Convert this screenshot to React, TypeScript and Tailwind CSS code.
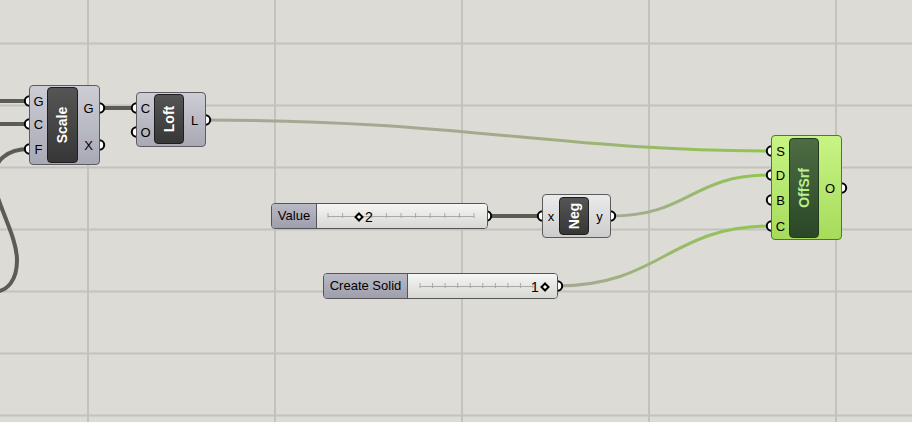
import React from 'react';

type Port = { name: string; y: number };

interface GhComponent {
  id: string;
  label: string;
  x: number;
  y: number;
  w: number;
  h: number;
  pillLeft: number;
  pillWidth: number;
  pillTop: number;
  pillBottom: number;
  inputs: Port[];
  outputs: Port[];
  theme: 'gray' | 'light' | 'green';
}

interface Slider {
  id: string;
  label: string;
  x: number;
  y: number;
  labelW: number;
  bodyW: number;
  value: string;
  trackFrom: number;
  trackTo: number;
  ticks: number;
  knob: number;
  valueLeft: boolean;
}

const components: GhComponent[] = [
  {
    id: 'scale', label: 'Scale', x: 29, y: 85, w: 70, h: 79,
    pillLeft: 18, pillWidth: 31, pillTop: 2, pillBottom: 2,
    inputs: [{ name: 'G', y: 16 }, { name: 'C', y: 39 }, { name: 'F', y: 64 }],
    outputs: [{ name: 'G', y: 23 }, { name: 'X', y: 60 }],
    theme: 'gray',
  },
  {
    id: 'loft', label: 'Loft', x: 136, y: 92, w: 69, h: 54,
    pillLeft: 18, pillWidth: 30, pillTop: 2, pillBottom: 3,
    inputs: [{ name: 'C', y: 16 }, { name: 'O', y: 40 }],
    outputs: [{ name: 'L', y: 28 }],
    theme: 'gray',
  },
  {
    id: 'neg', label: 'Neg', x: 542, y: 194, w: 68, h: 43,
    pillLeft: 17, pillWidth: 30, pillTop: 3, pillBottom: 3,
    inputs: [{ name: 'x', y: 22 }],
    outputs: [{ name: 'y', y: 22 }],
    theme: 'light',
  },
  {
    id: 'offsrf', label: 'OffSrf', x: 771, y: 135, w: 70, h: 104,
    pillLeft: 18, pillWidth: 30, pillTop: 3, pillBottom: 2,
    inputs: [{ name: 'S', y: 16 }, { name: 'D', y: 40 }, { name: 'B', y: 65 }, { name: 'C', y: 91 }],
    outputs: [{ name: 'O', y: 53 }],
    theme: 'green',
  },
];

const sliders: Slider[] = [
  {
    id: 'value', label: 'Value', x: 271, y: 203, labelW: 45, bodyW: 170, value: '2',
    trackFrom: 11, trackTo: 157, ticks: 11, knob: 42, valueLeft: false,
  },
  {
    id: 'solid', label: 'Create Solid', x: 323, y: 273, labelW: 84, bodyW: 149, value: '1',
    trackFrom: 12, trackTo: 125, ticks: 10, knob: 137, valueLeft: true,
  },
];

const themes = {
  gray: {
    body: 'bg-linear-to-b from-[#cdcdd6] to-[#a9a9b5] border-[#5b5b60]',
    pill: 'bg-linear-to-b from-[#555555] to-[#373737] border-[#1e1e1e]',
    text: 'text-white',
  },
  light: {
    body: 'bg-linear-to-b from-[#ebebeb] to-[#cdcdcd] border-[#5b5b5b]',
    pill: 'bg-linear-to-b from-[#555555] to-[#373737] border-[#1e1e1e]',
    text: 'text-white',
  },
  green: {
    body: 'bg-linear-to-b from-[#c8f484] to-[#a6db5b] border-[#4c7a2a]',
    pill: 'bg-linear-to-b from-[#4d6d44] to-[#2b4726] border-[#223a1d]',
    text: 'text-[#b8f08c]',
  },
};

const darkWire = '#5c5c57';

const PortLabels = ({ ports }: { ports: Port[] }) => (
  <>
    {ports.map((p) => (
      <span
        key={p.name + p.y}
        className="absolute left-0 right-0 -translate-y-1/2 text-center text-[13px] leading-none text-black"
        style={{ top: p.y - 1 }}
      >
        {p.name}
      </span>
    ))}
  </>
);

const Node = ({ c }: { c: GhComponent }) => {
  const t = themes[c.theme];
  return (
    <div
      className={`absolute flex rounded-[4px] border ${t.body}`}
      style={{ left: c.x, top: c.y, width: c.w + 1, height: c.h + 1 }}
    >
      <div className="relative h-full" style={{ width: c.pillLeft - 1 }}>
        <PortLabels ports={c.inputs} />
      </div>
      <div
        className={`flex items-center justify-center rounded-[4px] border ${t.pill}`}
        style={{ width: c.pillWidth, marginTop: c.pillTop - 1, marginBottom: c.pillBottom - 1 }}
      >
        <span className={`-rotate-90 whitespace-nowrap text-[14px] font-bold leading-none ${t.text}`}>
          {c.label}
        </span>
      </div>
      <div className="relative h-full flex-1">
        <PortLabels ports={c.outputs} />
      </div>
    </div>
  );
};

const NumberSlider = ({ s }: { s: Slider }) => {
  const step = (s.trackTo - s.trackFrom) / (s.ticks - 1);
  return (
    <div
      className="absolute flex h-[26px] overflow-hidden rounded-[4px] border border-[#555558]"
      style={{ left: s.x, top: s.y }}
    >
      <div
        className="flex items-center justify-center border-r border-[#555558] bg-linear-to-b from-[#babac6] to-[#9e9eac] text-[13px] text-black"
        style={{ width: s.labelW }}
      >
        {s.label}
      </div>
      <div className="relative bg-linear-to-b from-[#f6f6f4] to-[#d7d7d4]" style={{ width: s.bodyW }}>
        <svg className="absolute left-0 top-0" width={s.bodyW} height={24}>
          <line x1={s.trackFrom} x2={s.trackTo} y1={12.5} y2={12.5} stroke="#a9a9a9" strokeWidth={1} />
          {Array.from({ length: s.ticks }).map((_, i) => (
            <line
              key={i}
              x1={s.trackFrom + i * step}
              x2={s.trackFrom + i * step}
              y1={9}
              y2={14}
              stroke="#a9a9a9"
              strokeWidth={1}
            />
          ))}
        </svg>
        <div
          className="absolute h-[7px] w-[7px] -translate-x-1/2 -translate-y-1/2 rotate-45 border-2 border-black bg-white"
          style={{ left: s.knob, top: 12.5 }}
        />
        <span
          className="absolute -translate-y-1/2 text-[14px] leading-none text-black"
          style={s.valueLeft ? { left: s.knob - 14, top: 13 } : { left: s.knob + 6, top: 13 }}
        >
          {s.value}
        </span>
      </div>
    </div>
  );
};

const App = () => {
  const hLines = Array.from({ length: 7 }).map((_, i) => 43.5 + i * 62);
  const vLines = Array.from({ length: 5 }).map((_, i) => 88 + i * 187);

  const ports: { x: number; y: number }[] = [];
  components.forEach((c) => {
    c.inputs.forEach((p) => ports.push({ x: c.x + 0.5, y: c.y + p.y }));
    c.outputs.forEach((p) => ports.push({ x: c.x + c.w + 0.5, y: c.y + p.y }));
  });
  ports.push({ x: 486.5, y: 216 });
  ports.push({ x: 557.5, y: 286 });

  return (
    <div className="relative h-[422px] w-[912px] overflow-hidden bg-[#dcdbd5] font-['Liberation_Sans',Arial,sans-serif]">
      <svg className="absolute inset-0" width={912} height={422}>
        <defs>
          <linearGradient id="wireS" gradientUnits="userSpaceOnUse" x1={206} y1={0} x2={771} y2={0}>
            <stop offset="0" stopColor="#a6a798" />
            <stop offset="0.55" stopColor="#a3aa8c" />
            <stop offset="1" stopColor="#8fc848" />
          </linearGradient>
          <linearGradient id="wireD" gradientUnits="userSpaceOnUse" x1={610} y1={0} x2={771} y2={0}>
            <stop offset="0" stopColor="#a6a798" />
            <stop offset="1" stopColor="#8fc848" />
          </linearGradient>
          <linearGradient id="wireC" gradientUnits="userSpaceOnUse" x1={557} y1={0} x2={771} y2={0}>
            <stop offset="0" stopColor="#a6a798" />
            <stop offset="1" stopColor="#8fc848" />
          </linearGradient>
        </defs>

        {hLines.map((y) => (
          <line key={'h' + y} x1={0} x2={912} y1={y} y2={y} stroke="#c3c2bc" strokeWidth={2} />
        ))}
        {vLines.map((x) => (
          <line key={'v' + x} x1={x} x2={x} y1={0} y2={422} stroke="#c3c2bc" strokeWidth={2} />
        ))}

        {/* dark wires */}
        <g fill="none" stroke={darkWire} strokeWidth={4}>
          <path d="M -5 101 L 29 101" />
          <path d="M -5 124 L 29 124" />
          <path d="M 29 149 C 8 149, -6 160, -6 178 C -6 200, 17 235, 17 260 C 17 280, 8 291, -6 292" />
          <path d="M 99 108 L 136 108" />
          <path d="M 486 216 L 542 216" />
        </g>

        {/* data wires into OffSrf */}
        <g fill="none" strokeWidth={3}>
          <path d="M 206 120 C 460 120, 560 151, 771 151" stroke="url(#wireS)" />
          <path d="M 610 216 C 690 216, 690 175, 771 175" stroke="url(#wireD)" />
          <path d="M 557 286 C 660 286, 670 226, 771 226" stroke="url(#wireC)" />
        </g>

        {ports.map((p, i) => (
          <circle key={i} cx={p.x} cy={p.y} r={4.7} fill="#ffffff" stroke="#000000" strokeWidth={2} />
        ))}
      </svg>

      {components.map((c) => (
        <Node key={c.id} c={c} />
      ))}
      {sliders.map((s) => (
        <NumberSlider key={s.id} s={s} />
      ))}
    </div>
  );
};

export default App;
